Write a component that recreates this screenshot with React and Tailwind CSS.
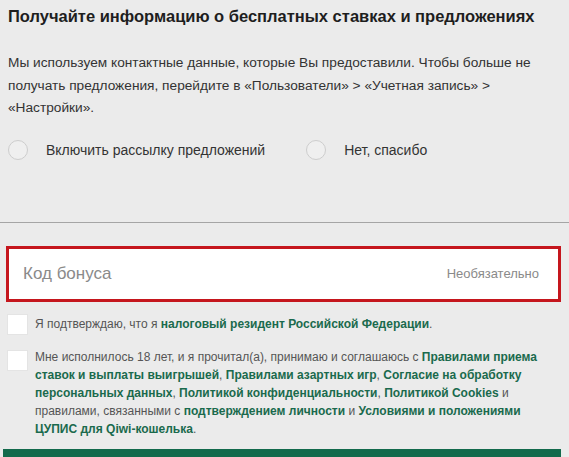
const font = { fontFamily: '"Liberation Sans", Arial, sans-serif' }

function Radio({ label }) {
  return (
    <label className="flex items-center gap-[18px]">
      <span className="w-[20px] h-[20px] rounded-full border border-[#cdcdcd] bg-[#efefef]" />
      <span className="text-[14px] text-[#333]">{label}</span>
    </label>
  )
}

const Box = ({ className = '' }) => (
  <span className={`shrink-0 w-[21px] h-[21px] bg-white border border-[#e4e4e4] ${className}`} />
)

const L = ({ children }) => <b className="font-bold text-[#1a6a4d]">{children}</b>

export default function App() {
  return (
    <div className="w-[569px] h-[457px] overflow-hidden bg-[#ebebeb]" style={font}>
      <div className="pl-[8px] pr-[12px] pt-[4px]">
        <h2 className="text-[16.5px] font-bold text-[#1e1e1e] leading-[24px]">
          Получайте информацию о бесплатных ставках и предложениях
        </h2>
        <p className="mt-[24px] text-[13.7px] leading-[22.5px] text-[#333]">
          Мы используем контактные данные, которые Вы предоставили. Чтобы больше не получать предложения, перейдите в «Пользователи» &gt; «Учетная запись» &gt; «Настройки».
        </p>
        <div className="mt-[20px] flex gap-[41px]">
          <Radio label="Включить рассылку предложений" />
          <Radio label="Нет, спасибо" />
        </div>
      </div>
      <div className="mt-[61px] border-t border-[#a5a5a5]" />
      <div className="pl-[6px] pr-[8px] pt-[23px]">
        <div className="h-[56px] bg-white border-[3px] border-[#c5161d] flex items-center justify-between pl-[14px] pr-[19px]">
          <span className="text-[17px] text-[#8a8a8a]">Код бонуса</span>
          <span className="text-[13px] text-[#8a8a8a]">Необязательно</span>
        </div>
        <div className="mt-[12px] flex items-center gap-[7px] pl-[1px]">
          <Box />
          <p className="text-[12px] leading-[18px] text-[#555]">
            Я подтверждаю, что я <L>налоговый резидент Российской Федерации</L>.
          </p>
        </div>
        <div className="mt-[13px] flex items-start gap-[7px] pl-[1px] pr-[14px]">
          <Box className="mt-[2px]" />
          <p className="text-[12px] leading-[18px] text-[#555]">
            Мне исполнилось 18 лет, и я прочитал(а), принимаю и соглашаюсь с <L>Правилами приема ставок и выплаты выигрышей</L>, <L>Правилами азартных игр</L>, <L>Согласие на обработку персональных данных</L>, <L>Политикой конфиденциальности</L>, <L>Политикой Cookies</L> и правилами, связанными с <L>подтверждением личности</L> и <L>Условиями и положениями ЦУПИС для Qiwi-кошелька</L>.
          </p>
        </div>
      </div>
      <div className="mt-[11px] ml-[3px] w-[558px] h-[40px] bg-[#136a4c]" />
    </div>
  )
}
